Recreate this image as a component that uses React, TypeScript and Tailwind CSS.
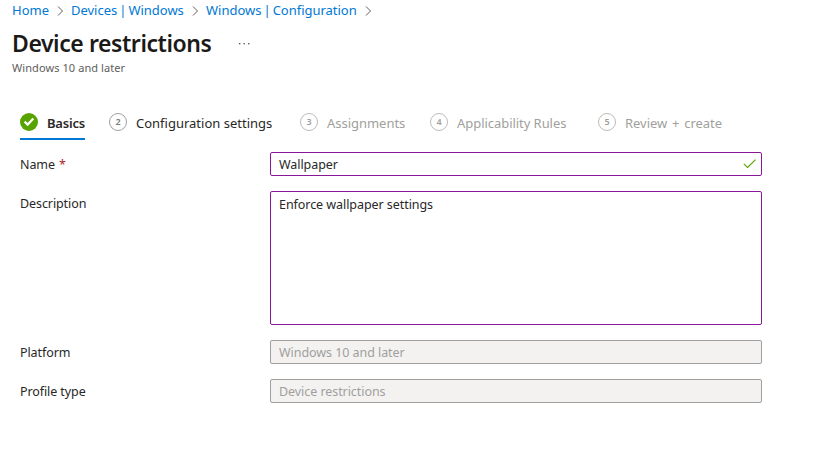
import React from "react";

const Chevron = () => (
  <svg width="7" height="10" viewBox="0 0 7 10" className="mr-[7px] ml-2 mt-px shrink-0" fill="none" stroke="#605e5c" strokeWidth="1">
    <path d="M1 0.5 5.5 5 1 9.5" />
  </svg>
);

const crumbs = [
  { label: "Home", cls: "w-[37px]" },
  { label: "Devices | Windows", cls: "w-[113px] tracking-[-0.02px] [word-spacing:-1.3px]" },
  { label: "Windows | Configuration", cls: "w-[151px] tracking-[-0.02px] [word-spacing:-1.3px]" },
];

const steps = [
  { n: 2, label: "Configuration settings", cls: "w-[191px] text-[#292827]", text: "", ring: "border-[#a19f9d] text-[#797775]" },
  { n: 3, label: "Assignments", cls: "w-[130px] text-[#a19f9d]", text: "tracking-[-0.03px]", ring: "border-[#bebbb8] text-[#a19f9d]" },
  { n: 4, label: "Applicability Rules", cls: "w-[168px] text-[#a19f9d]", text: "tracking-[-0.05px]", ring: "border-[#bebbb8] text-[#a19f9d]" },
  { n: 5, label: "Review + create", cls: "w-[130px] text-[#a19f9d]", text: "tracking-[-0.02px] [word-spacing:1.4px]", ring: "border-[#bebbb8] text-[#a19f9d]" },
];

function Field({ label, required, children }: { label: string; required?: boolean; children: React.ReactNode }) {
  return (
    <div className="flex">
      <label className="h-6 w-[250px] shrink-0 pt-px text-[12.5px] leading-6 tracking-[-0.09px]">
        {label}
        {required && <span className="ml-1 text-[#a4262c]">*</span>}
      </label>
      {children}
    </div>
  );
}

const box = "w-[492px] rounded-[2px] border pl-2 text-[12.5px] tracking-[-0.06px]";

export default function App() {
  return (
    <main className="h-[453px] w-[817px] overflow-hidden bg-white font-['Noto_Sans','Open_Sans',sans-serif] text-[13px] text-[#292827]">
      <nav className="flex h-[21px] items-center pl-3 text-[#0078d4]">
        {crumbs.map((c) => (
          <React.Fragment key={c.label}>
            <span className={`${c.cls} whitespace-nowrap`}>{c.label}</span>
            <Chevron />
          </React.Fragment>
        ))}
      </nav>
      <header className="pl-3">
        <div className="flex h-[39px] items-center">
          <h1 className="w-[226px] pt-1 text-[23px] leading-8 font-semibold tracking-[-0.43px] whitespace-nowrap text-[#1b1a19]">Device restrictions</h1>
          <svg width="12" height="2" viewBox="0 0 12 2" className="mt-[7px]" fill="#605e5c">
            <rect x="1" y="0" width="1.4" height="1.4" />
            <rect x="5.5" y="0" width="1.4" height="1.4" />
            <rect x="10" y="0" width="1.4" height="1.4" />
          </svg>
        </div>
        <p className="text-[11px] leading-4 tracking-[0.08px] text-[#605e5c]">Windows 10 and later</p>
      </header>
      <div className="mt-[37px] flex h-[27px] pl-5">
        <div className="mr-6 flex h-[27px] w-[65px] border-b-2 border-[#0078d4]">
          <svg width="18" height="18" viewBox="0 0 18 18" className="mr-[9px] shrink-0">
            <circle cx="9" cy="9" r="9" fill="#57a300" />
            <path d="M4.6 8.6 7.7 11.6 13.3 5.4" fill="none" stroke="#fff" strokeWidth="2.2" />
          </svg>
          <span className="leading-5 font-semibold tracking-[-0.2px]">Basics</span>
        </div>
        {steps.map((s) => (
          <div key={s.n} className={`${s.cls} flex shrink-0`}>
            <span className={`${s.ring} mr-[9px] flex size-[18px] shrink-0 items-center justify-center rounded-full border pb-px text-[9px] leading-none font-semibold`}>
              {s.n}
            </span>
            <span className={`${s.text} leading-5 whitespace-nowrap`}>{s.label}</span>
          </div>
        ))}
      </div>
      <form className="mt-3 flex flex-col gap-[15px] pl-5">
        <Field label="Name" required>
          <div className={`${box} flex h-6 items-center justify-between border-[#881798] pr-[5px]`}>
            <span className="pt-0.5">Wallpaper</span>
            <svg width="13" height="10" viewBox="0 0 13 10" fill="none" stroke="#57a300" strokeWidth="1.1">
              <path d="M0.8 4.8 4.6 8.5 12.5 0.7" />
            </svg>
          </div>
        </Field>
        <Field label="Description">
          <div className={`${box} h-[134px] border-[#881798] pt-0.5 leading-[22px]`}>Enforce wallpaper settings</div>
        </Field>
        <Field label="Platform">
          <div className={`${box} h-6 border-[#a19f9d] bg-[#f3f2f1] pt-px leading-[22px] text-[#a19f9d]`}>Windows 10 and later</div>
        </Field>
        <Field label="Profile type">
          <div className={`${box} h-6 border-[#a19f9d] bg-[#f3f2f1] pt-px leading-[22px] text-[#a19f9d]`}>Device restrictions</div>
        </Field>
      </form>
    </main>
  );
}
